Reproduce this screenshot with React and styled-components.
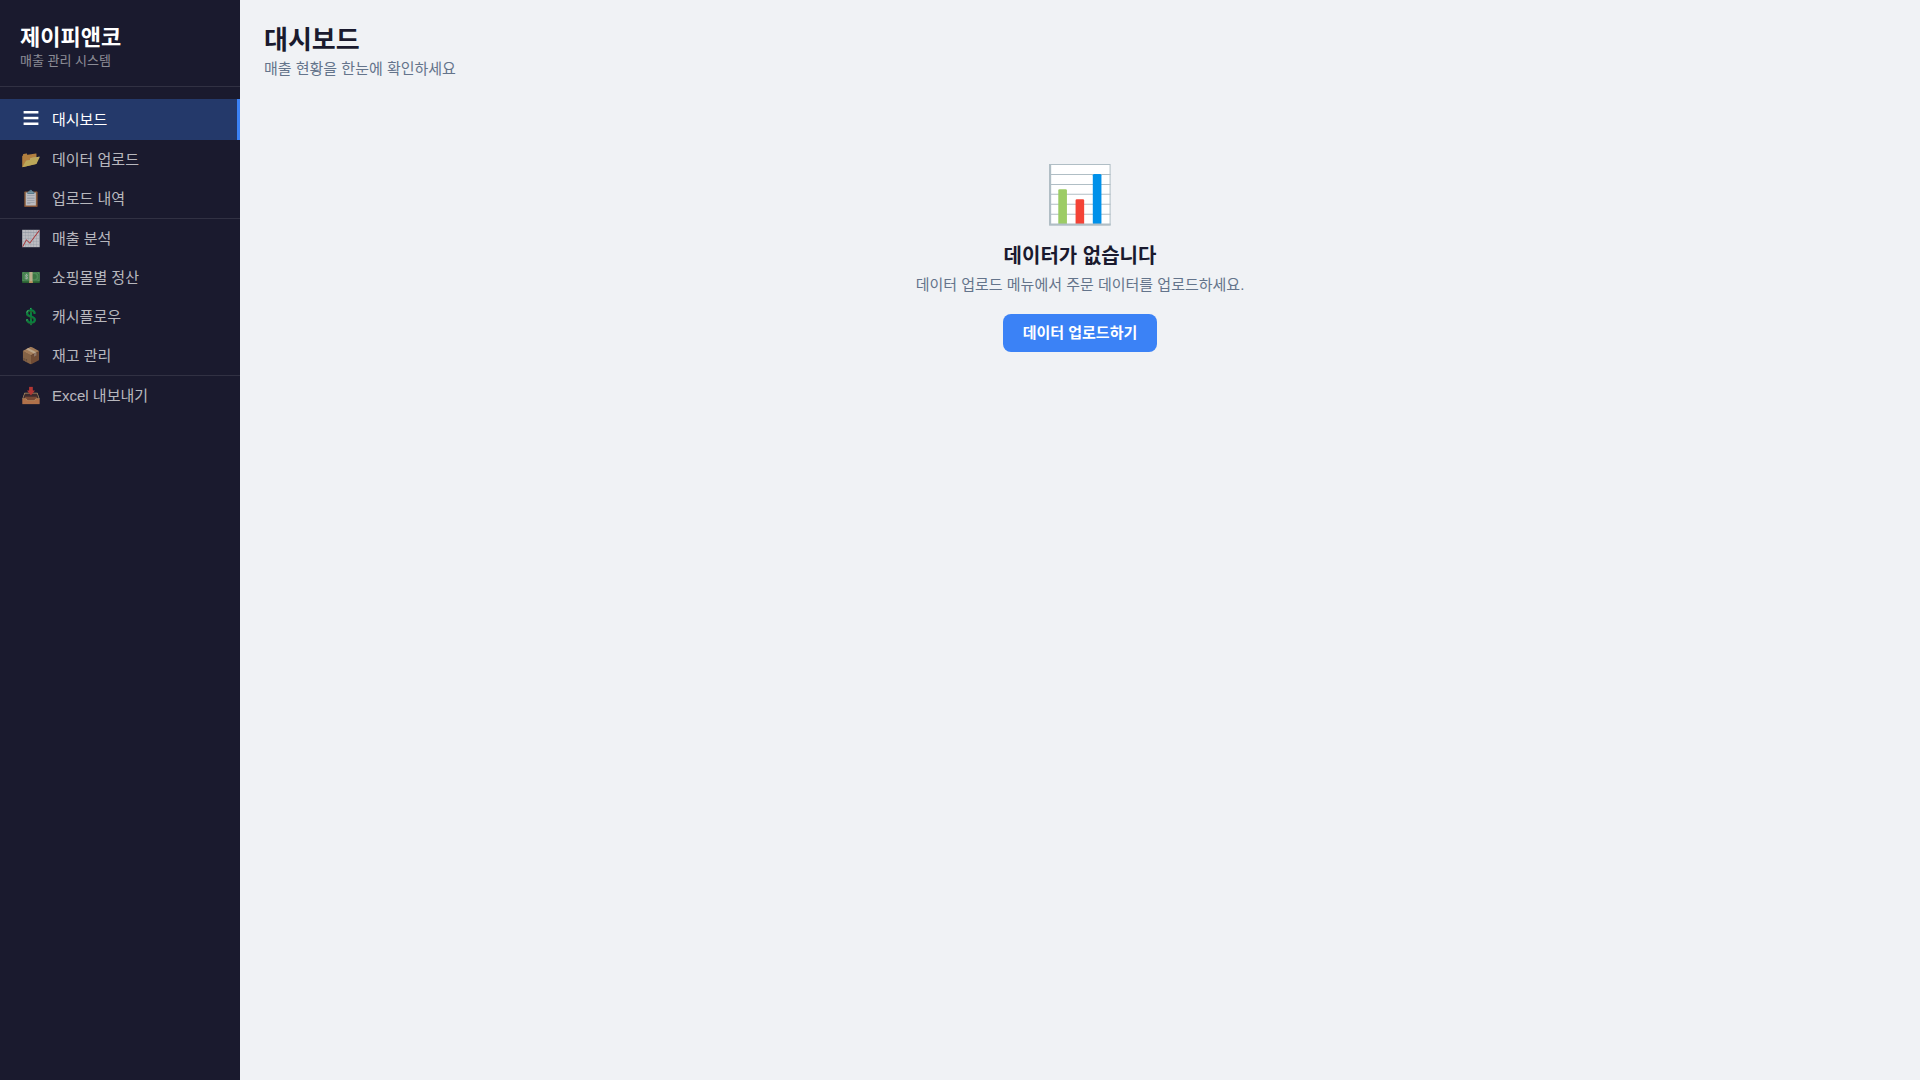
import React from "react";
import styled, { createGlobalStyle } from "styled-components";

const Global = createGlobalStyle`
  * { box-sizing: border-box; margin: 0; padding: 0; }
  body {
    background: #f0f2f5;
    color: #1a1a2e;
    font-family: "Liberation Sans", "Noto Sans CJK KR", sans-serif;
  }
`;

const Layout = styled.div`
  display: flex;
  min-height: 100vh;
`;

const Sidebar = styled.aside`
  flex: 0 0 240px;
  background: #1a1a2e;
  color: #fff;
`;

const Brand = styled.header`
  padding: 24px 20px 16px;
  border-bottom: 1px solid rgba(255, 255, 255, 0.1);
`;

const BrandName = styled.h2`
  font-size: 22px;
  font-weight: 700;
  line-height: 28px;
`;

const BrandNote = styled.p`
  font-size: 13px;
  line-height: 18px;
  color: rgba(255, 255, 255, 0.5);
`;

const Nav = styled.nav`
  padding: 12px 0;
`;

const NavGroup = styled.div`
  & + & {
    border-top: 1px solid rgba(255, 255, 255, 0.1);
  }
`;

const NavLink = styled.a`
  display: flex;
  align-items: center;
  gap: 10px;
  padding: ${(p) => (p.$active ? "11px 20px" : "10px 20px")};
  font-size: 15px;
  line-height: 19px;
  text-decoration: none;
  color: ${(p) => (p.$active ? "#fff" : "rgba(255, 255, 255, 0.7)")};
  background: ${(p) => (p.$active ? "rgba(59, 130, 246, 0.3)" : "transparent")};
  border-right: 3px solid ${(p) => (p.$active ? "#3b82f6" : "transparent")};
`;

const NavIcon = styled.span`
  display: flex;
  justify-content: center;
  width: 22px;
  font-size: 16px;
`;

const Main = styled.main`
  flex: 1;
  padding: 24px;
`;

const Title = styled.h1`
  font-size: 26px;
  font-weight: 700;
  line-height: 32px;
`;

const Subtitle = styled.p`
  margin-top: 4px;
  font-size: 15px;
  line-height: 18px;
  color: #64748b;
`;

const Empty = styled.section`
  display: flex;
  flex-direction: column;
  align-items: center;
  padding: 80px 20px;
  text-align: center;
`;

const EmptyIcon = styled.div`
  margin-bottom: 12px;
  font-size: 56px;
  line-height: 74px;
`;

const EmptyTitle = styled.h3`
  margin-bottom: 8px;
  font-size: 20px;
  line-height: 24px;
`;

const EmptyText = styled.p`
  margin-bottom: 20px;
  font-size: 15px;
  line-height: 18px;
  color: #64748b;
`;

const PrimaryButton = styled.button`
  padding: 10px 20px;
  border: 0;
  border-radius: 8px;
  background: #3b82f6;
  color: #fff;
  font-family: inherit;
  font-size: 15px;
  font-weight: 600;
  line-height: 18px;
  cursor: pointer;
`;

function MenuIcon() {
  return (
    <svg width="16" height="19" viewBox="0 0 16 19" fill="currentColor">
      <rect x="0.6" y="1" width="14.8" height="2.5" />
      <rect x="0.6" y="6.8" width="14.8" height="2.5" />
      <rect x="0.6" y="12.5" width="14.8" height="2.5" />
    </svg>
  );
}

const groups = [
  [
    [<MenuIcon />, "대시보드"],
    ["📂", "데이터 업로드"],
    ["📋", "업로드 내역"],
  ],
  [
    ["📈", "매출 분석"],
    ["💵", "쇼핑몰별 정산"],
    ["💲", "캐시플로우"],
    ["📦", "재고 관리"],
  ],
  [["📥", "Excel 내보내기"]],
];

export default function App() {
  const current = "대시보드";
  return (
    <Layout>
      <Global />
      <Sidebar>
        <Brand>
          <BrandName>제이피앤코</BrandName>
          <BrandNote>매출 관리 시스템</BrandNote>
        </Brand>
        <Nav>
          {groups.map((items, g) => (
            <NavGroup key={g}>
              {items.map(([icon, label]) => (
                <NavLink key={label} href="#" $active={label === current}>
                  <NavIcon aria-hidden="true">{icon}</NavIcon>
                  {label}
                </NavLink>
              ))}
            </NavGroup>
          ))}
        </Nav>
      </Sidebar>
      <Main>
        <Title>{current}</Title>
        <Subtitle>매출 현황을 한눈에 확인하세요</Subtitle>
        <Empty>
          <EmptyIcon aria-hidden="true">📊</EmptyIcon>
          <EmptyTitle>데이터가 없습니다</EmptyTitle>
          <EmptyText>데이터 업로드 메뉴에서 주문 데이터를 업로드하세요.</EmptyText>
          <PrimaryButton type="button">데이터 업로드하기</PrimaryButton>
        </Empty>
      </Main>
    </Layout>
  );
}
